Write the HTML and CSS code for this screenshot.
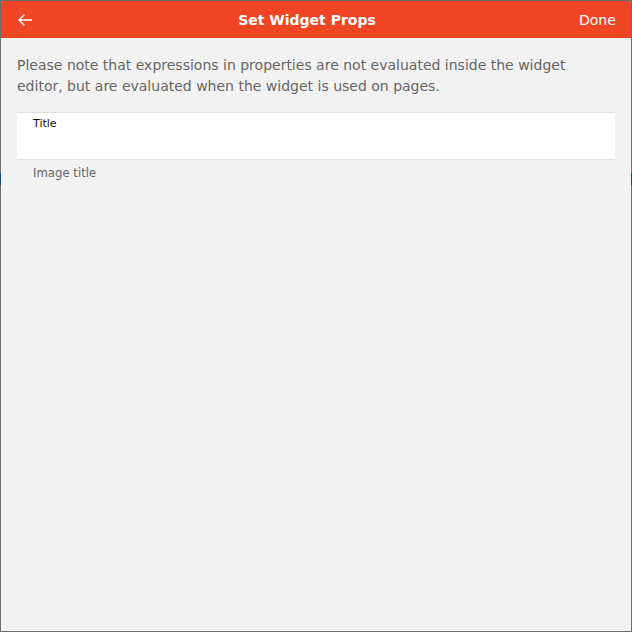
FILE: index.html
```html
<!DOCTYPE html>
<html>
<head>
<meta charset="utf-8">
<link rel="stylesheet" href="styles.css">
</head>
<body>
<div class="frame">
  <header class="bar">
    <span class="back">
      <svg width="16" height="14" viewBox="0 0 16 14"><path d="M15 7H2M7.5 1.5L2 7l5.5 5.5" fill="none" stroke="#fff" stroke-width="1.4"/></svg>
    </span>
    <h1 class="title">Set Widget Props</h1>
    <span class="done">Done</span>
  </header>
  <main class="content">
    <p class="note">Please note that expressions in properties are not evaluated inside the widget editor, but are evaluated when the widget is used on pages.</p>
    <div class="field">
      <label class="field-label">Title</label>
    </div>
    <div class="hint">Image title</div>
  </main>
</div>
</body>
</html>
```
FILE: styles.css
```css
html, body { margin: 0; padding: 0; }
body {
  width: 632px;
  height: 632px;
  background: linear-gradient(to bottom, #6e6e6e 0, #6e6e6e 173px, #1d4a75 173px, #1d4a75 185px, #6e6e6e 185px);
  font-family: "DejaVu Sans", sans-serif;
  overflow: hidden;
}
.frame {
  box-sizing: border-box;
  margin: 1px 1px 0 1px;
  width: 630px;
  height: 630px;
  background: #f2f2f2;
  border-radius: 3px 3px 0 0;
  overflow: hidden;
  display: flex;
  flex-direction: column;
}
.bar {
  height: 37px;
  background: #f04525;
  display: flex;
  align-items: center;
  color: #fff;
  padding: 0 16px 0 16px;
  flex-shrink: 0;
}
.back { width: 18px; display: flex; align-items: center; padding-top: 1px; }
.title {
  flex: 1;
  margin: 0;
  text-align: center;
  font-size: 14px;
  font-weight: bold;
}
.done { font-size: 14px; width: 36px; }
.content { padding: 0 16px; }
.note {
  margin: 17px 0 15px;
  font-size: 14px;
  line-height: 21px;
  color: #666;
}
.field {
  background: #fff;
  border-top: 1px solid #dedede;
  border-bottom: 1px solid #dedede;
  height: 46px;
}
.field-label {
  display: block;
  font-size: 11px;
  color: #111;
  padding: 4px 0 0 16px;
}
.hint {
  font-size: 11.7px;
  color: #666;
  padding: 6px 0 0 16px;
}
```
